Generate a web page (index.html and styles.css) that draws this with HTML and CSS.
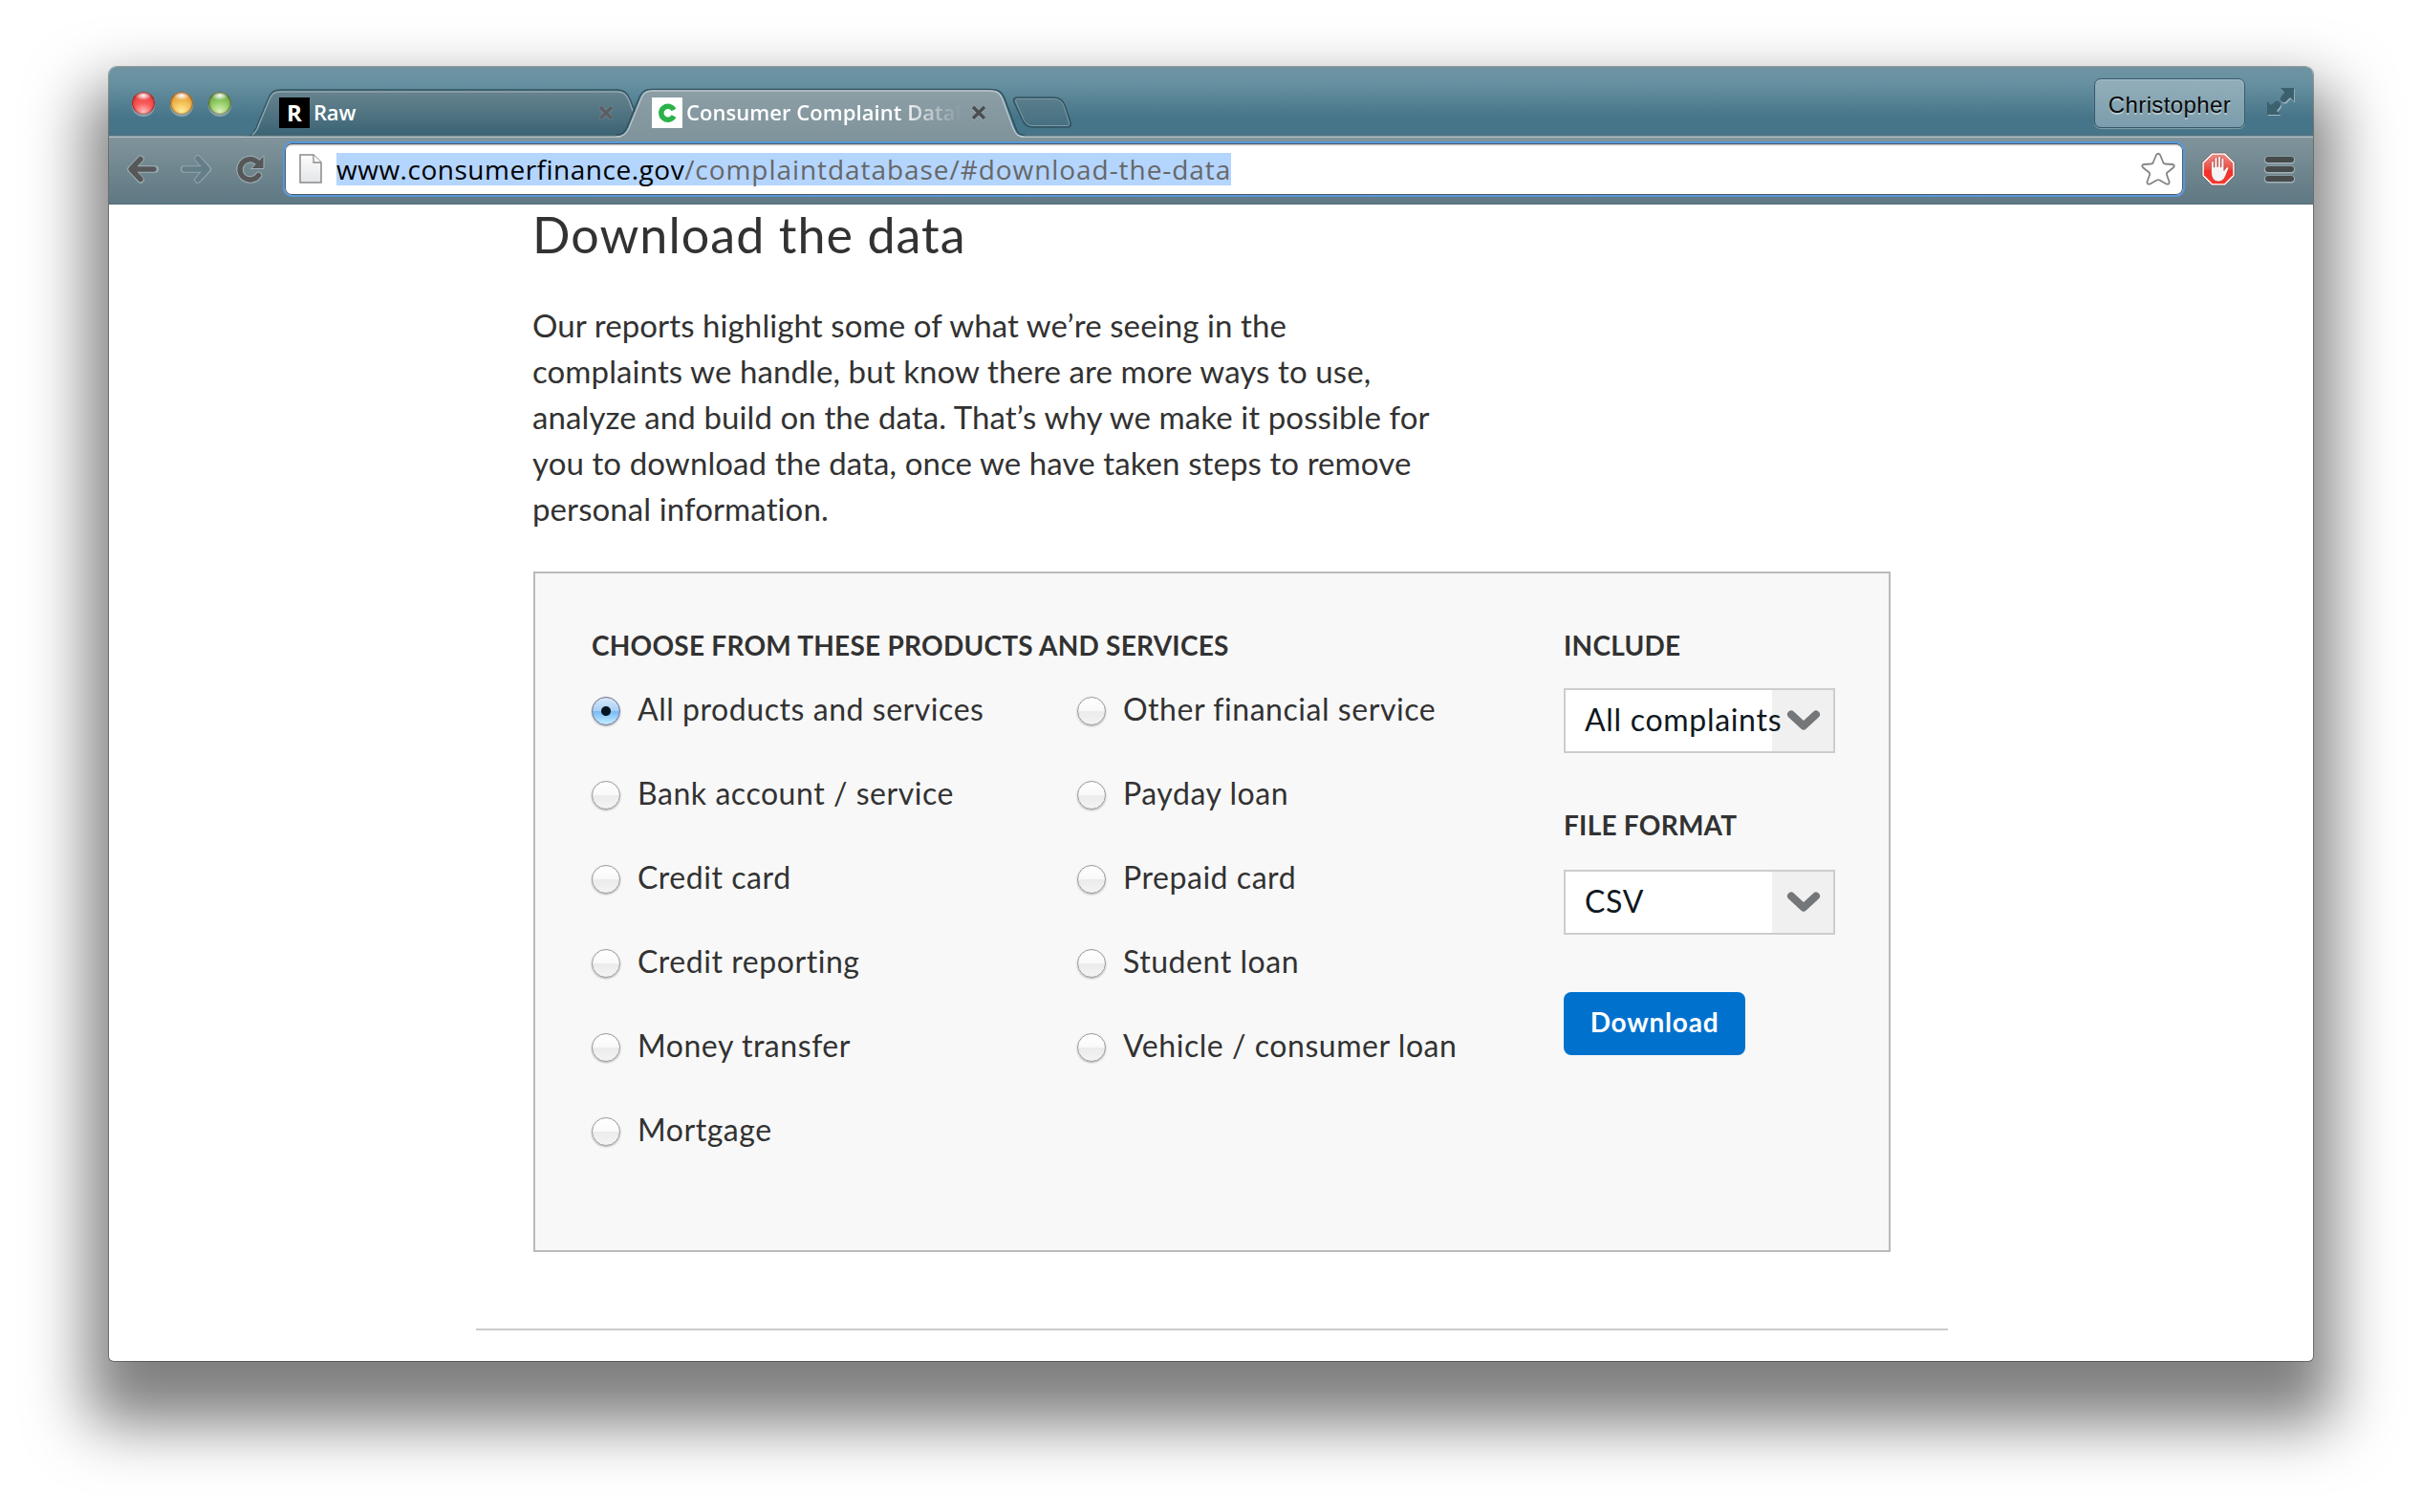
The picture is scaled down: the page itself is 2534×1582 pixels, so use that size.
FILE: index.html
```html
<!DOCTYPE html>
<html lang="en">
<head>
<meta charset="utf-8">
<title>Consumer Complaint Database</title>
<link rel="stylesheet" href="styles.css">
</head>
<body>
<div class="window">
  <header class="tabstrip">
    <svg class="tab-shapes" width="2306" height="74" viewBox="0 0 2306 74" aria-hidden="true">
      <defs>
        <linearGradient id="inactive" x1="0" y1="0" x2="0" y2="1"><stop offset="0" stop-color="#68848f"/><stop offset="1" stop-color="#3a6374"/></linearGradient>
        <linearGradient id="active" x1="0" y1="0" x2="0" y2="1"><stop offset="0" stop-color="#8c9ea6"/><stop offset="1" stop-color="#80949b"/></linearGradient>
        <linearGradient id="newtab" x1="0" y1="0" x2="0" y2="1"><stop offset="0" stop-color="#5b7e8b"/><stop offset="1" stop-color="#456f80"/></linearGradient>
      </defs>
      <path d="M141 73C149 73 151 70 154 64L166 35C169 27 172 24 180 24H531C539 24 542 27 545 34L558 64C561 70 562 73 566 73Z" fill="url(#inactive)" stroke="#2f5361" stroke-width="1.5"/>
      <path d="M150 71C152 70 154 67 155 65L167 36C170 28 173 26 180 26H531C538 26 541 28 544 35L548 46" fill="none" stroke="#8fa5ae" stroke-width="1.5"/>
      <path d="M0 72H2306" stroke="#5d6f77" stroke-width="1"/>
      <path d="M0 73.2H2306" stroke="#b5c1c6" stroke-width="1.5"/>
      <path d="M530 74C538 74 541 71 544 64L556 35C559 27 562 24 569 24H921C929 24 932 26 935 34L946 64C949 71 951 74 958 74Z" fill="url(#active)"/>
      <path d="M530 71.5C537 71 539 69 542 63L554 34C557 26 561 23.500 569 23.500H921C930.500 23.500 934 26 937 33L948 62C950 69 952 71 958 71.500" fill="none" stroke="#2f5361" stroke-width="1.5"/>
      <path d="M530 73.200C538 73 541 70 544 64L556 35C559 27 562 25 569 25H921C929 25 932 27 935 34L946 64C949 71 951 73 958 73.200" fill="none" stroke="#bac5ca" stroke-width="1.5"/>
      <path d="M950 32H988C995 32 998 35 1000 40L1006 58C1007 61 1006 63 1003 63H967C961 63 958 61 956 56L947 37C946 34 947 32 950 32Z" fill="url(#newtab)" stroke="#2f5361" stroke-width="1.5"/>
      <path d="M951 33.500H988C994 33.500 997 36 999 41L1004 57C1005 60 1005 61.500 1002 61.500H967C962 61.500 959 59 957 55L949 37C948 35 949 33.500 951 33.500Z" fill="none" stroke="#7f9aa5"/>
    </svg>
    <div class="lights"><span class="light red"></span><span class="light amber"></span><span class="light green"></span></div>
    <div class="tab tab-raw">
      <span class="favicon favicon-raw">R</span>
      <span class="tab-title raw-title">Raw</span>
      <svg class="close dim" viewBox="0 0 18 18"><path d="M3 3L15 15M15 3L3 15"/></svg>
    </div>
    <div class="tab tab-current">
      <span class="favicon"><svg width="32" height="32" viewBox="0 0 32 32"><path d="M23 13A7 7 0 1 0 23 19.500" fill="none" stroke="#2bb24a" stroke-width="5.500"/></svg></span>
      <span class="tab-title fade">Consumer Complaint Datab</span>
      <svg class="close" viewBox="0 0 18 18"><path d="M3 3L15 15M15 3L3 15"/></svg>
    </div>
    <div class="profile">Christopher</div>
    <svg class="fullscreen" width="30" height="30" viewBox="0 0 30 30">
      <g fill="#a4b8c0" transform="translate(.8 1.400)"><path d="M15 1H29V15L25 11L20 16C17 17 14 14 15 11L19 6Z"/><path d="M1 15V29H15L11 25L15 20C16 17 13 14 10 15L5 19Z"/></g>
      <g fill="#3b606e"><path d="M15 1H29V15L25 11L20 16C17 17 14 14 15 11L19 6Z"/><path d="M1 15V29H15L11 25L15 20C16 17 13 14 10 15L5 19Z"/></g>
    </svg>
  </header>

  <nav class="toolbar">
    <svg class="nav-icon back" width="34" height="32" viewBox="0 0 34 32">
      <g fill="none" stroke-linecap="round" stroke-linejoin="round"><path d="M15 5.500L5 16L15 27M5 16H30" stroke="#a2b0b6" stroke-width="7.500"/><path d="M15 5.500L5 16L15 26.500M6 16H29" stroke="#555758" stroke-width="5.500"/></g>
    </svg>
    <svg class="nav-icon forward" width="34" height="32" viewBox="0 0 34 32">
      <g fill="none" stroke-linecap="round" stroke-linejoin="round"><path d="M19 5L29.500 16L19 27M4.500 16H29" stroke="#91a5ad" stroke-width="7.500"/><path d="M19 5L29 16L19 27M5 16H28" stroke="#647e88" stroke-width="5.500"/></g>
    </svg>
    <svg class="nav-icon reload" width="32" height="32" viewBox="0 0 32 32">
      <g fill="none" stroke-linecap="round"><path d="M22.500 8A10.700 10.700 0 1 0 24.500 22.500" stroke="#a2b0b6" stroke-width="7.500"/><path d="M17 15.500H30V2Z" fill="#555758" stroke="#a2b0b6"/><path d="M22.500 8A10.700 10.700 0 1 0 24.500 22.500" stroke="#555758" stroke-width="5.500"/></g>
    </svg>
    <div class="omnibox">
      <svg class="page-icon" width="26" height="34" viewBox="0 0 26 34">
        <defs><linearGradient id="sheet" x1="0" y1="0" x2="0" y2="1"><stop offset="0" stop-color="#fdfdfd"/><stop offset="1" stop-color="#e4e5e7"/></linearGradient></defs>
        <path d="M2 2H16L24 10V31H2Z" fill="url(#sheet)" stroke="#8a8a8a" stroke-width="1.500"/><path d="M16 2V10H24" fill="#fff" stroke="#8a8a8a" stroke-width="1.300"/>
      </svg>
      <span class="url"><span class="host">www.consumerfinance.gov</span><span class="path">/complaintdatabase/#download-the-data</span></span>
      <svg class="star" width="36" height="36" viewBox="0 0 36 36"><path d="M16 3Q18 .5 20 3L23.500 11.500Q24 12.500 25.500 12.500L33 13Q36 13.700 34 16.200L27.500 21.500Q26.500 22.500 27 24L29.500 31Q30 34.500 26.500 33.500L19.500 29.500Q18 28.700 16.500 29.500L9.500 33.500Q6 34.500 6.500 31L9 24Q9.500 22.500 8.500 21.500L2 16.200Q0 13.700 3 13L10.500 12.500Q12 12.500 12.500 11.500Z" fill="#fff" stroke="#858585" stroke-width="1.800" stroke-linejoin="round"/></svg>
    </div>
    <svg class="adblock" width="36" height="36" viewBox="0 0 36 36">
      <defs><linearGradient id="stop" x1="0" y1="0" x2="0" y2="1"><stop offset="0" stop-color="#ee8a84"/><stop offset=".5" stop-color="#ea4a43"/><stop offset=".55" stop-color="#f23129"/><stop offset="1" stop-color="#fb352c"/></linearGradient></defs>
      <path d="M11 1H25L35 11V25L25 35H11L1 25V11Z" fill="#fff" stroke="#6e5e60" stroke-width=".8"/>
      <path d="M11.800 2.800H24.200L33.200 11.800V24.200L24.200 33.200H11.800L2.800 24.200V11.800Z" fill="url(#stop)"/>
      <path d="M10.500 21V10.500Q12 8.500 13.300 10.500V16H14V6.500Q15.500 4.500 16.800 6.500V15.500H17.500V5.200Q19 3.200 20.300 5.200V15.800H21V7.200Q22.500 5.200 23.800 7.200V19.500L26.500 16Q28.600 14.800 28.800 17L25.500 25Q23.500 30.500 18 31Q10.500 30.500 10.500 21Z" fill="#f5f5f5" stroke="#b3322d" stroke-width=".6"/>
    </svg>
    <svg class="menu" width="34" height="30" viewBox="0 0 34 30">
      <g fill="#a2b0b6"><rect x="1" y="1.500" width="32" height="8" rx="4"/><rect x="1" y="11.500" width="32" height="8" rx="4"/><rect x="1" y="21.500" width="32" height="8" rx="4"/></g>
      <g fill="#474a4b"><rect x="2" y="2" width="30" height="6" rx="3"/><rect x="2" y="12" width="30" height="6" rx="3"/><rect x="2" y="22" width="30" height="6" rx="3"/></g>
    </svg>
  </nav>

  <main class="page">
    <section class="content">
      <h1>Download the data</h1>
      <p class="intro">Our reports highlight some of what we’re seeing in the<br>complaints we handle, but know there are more ways to use,<br>analyze and build on the data. That’s why we make it possible for<br>you to download the data, once we have taken steps to remove<br>personal information.</p>
      <form class="panel">
        <div class="products">
          <h2>CHOOSE FROM THESE PRODUCTS AND SERVICES</h2>
          <ul class="options">
            <li><span class="radio checked"></span>All products and services</li>
            <li><span class="radio"></span>Bank account / service</li>
            <li><span class="radio"></span>Credit card</li>
            <li><span class="radio"></span>Credit reporting</li>
            <li><span class="radio"></span>Money transfer</li>
            <li><span class="radio"></span>Mortgage</li>
            <li><span class="radio"></span>Other financial service</li>
            <li><span class="radio"></span>Payday loan</li>
            <li><span class="radio"></span>Prepaid card</li>
            <li><span class="radio"></span>Student loan</li>
            <li><span class="radio"></span>Vehicle / consumer loan</li>
          </ul>
        </div>
        <div class="settings">
          <h2>INCLUDE</h2>
          <div class="select include"><span>All complaints</span><svg width="36" height="26" viewBox="0 0 36 26"><path d="M5 6.500L18 18.500L31 6.500" fill="none" stroke="#737779" stroke-width="8" stroke-linecap="round" stroke-linejoin="round"/></svg></div>
          <h2>FILE FORMAT</h2>
          <div class="select format"><span>CSV</span><svg width="36" height="26" viewBox="0 0 36 26"><path d="M5 6.500L18 18.500L31 6.500" fill="none" stroke="#737779" stroke-width="8" stroke-linecap="round" stroke-linejoin="round"/></svg></div>
          <div class="button">Download</div>
        </div>
      </form>
    </section>
    <div class="rule"></div>
  </main>
</div>
</body>
</html>
```
FILE: styles.css
```css
* { box-sizing: border-box; }
body { margin: 0; width: 2534px; height: 1582px; overflow: hidden; background: #fff; padding: 70px 0 0 114px; font-family: Lato, sans-serif; color: #323232; }
svg { display: block; flex: none; }

.window {
  width: 2306px; height: 1354px; background: #fff; border-radius: 8px 8px 5px 5px;
  box-shadow: 0 0 0 1px rgba(0,0,0,.32), 0 44px 64px 22px rgba(0,0,0,.5);
  display: flex; flex-direction: column;
}

/* Tab strip */
.tabstrip {
  position: relative; height: 74px; flex: none; display: flex; align-items: flex-start;
  padding-left: 24px; border-radius: 8px 8px 0 0;
  background: linear-gradient(#6f94a2 0, #6690a0 18px, #467488 54px, #467488 100%);
}
.tabstrip > * { position: relative; }
.tabstrip > .tab-shapes { position: absolute; left: 0; top: 0; }
.lights { display: flex; gap: 16px; margin-top: 26px; width: 104px; }
.light { width: 24px; height: 24px; border-radius: 50%; box-shadow: inset 0 0 2px 1px rgba(60,10,0,.55), 0 2px 1px rgba(190,210,218,.55); }
.red { background: radial-gradient(ellipse 9px 5px at 50% 4px, #fff, transparent), radial-gradient(circle at 50% 90%, #ffc2c2 0, #fb5a5a 40%, #d92a2c 100%); }
.amber { background: radial-gradient(ellipse 9px 5px at 50% 4px, #fff, transparent), radial-gradient(circle at 50% 90%, #fff0a0 0, #f6c35a 40%, #d27c20 100%); }
.green { background: radial-gradient(ellipse 9px 5px at 50% 4px, #fff, transparent), radial-gradient(circle at 50% 90%, #e2f5c0 0, #92cc66 45%, #4b8f35 100%); }

.tab { display: flex; align-items: center; height: 32px; margin-top: 32px; }
.tab-raw { margin-left: 50px; width: 351px; }
.tab-current { margin-left: 39px; width: 351px; }
.favicon { width: 32px; height: 32px; background: #fff; flex: none; }
.favicon-raw { background: #000; color: #fff; font: 700 24px/32px "Open Sans", sans-serif; text-align: center; }
.tab-title { font: 600 22px/32px "Open Sans", sans-serif; color: #fff; letter-spacing: .04px; margin-left: 4px; padding-bottom: 2px; flex: 1; white-space: nowrap; }
.raw-title { letter-spacing: -.2px; }
.fade { flex: none; width: 290px; margin-right: 7px; -webkit-mask-image: linear-gradient(to right, #000 222px, transparent 288px); mask-image: linear-gradient(to right, #000 222px, transparent 288px); }
.close { width: 18px; height: 18px; fill: none; stroke: #4b4e50; stroke-width: 3.4; filter: drop-shadow(0 1px 0 #a5b2b8); }
.dim { stroke: #5a5f62; filter: drop-shadow(0 0 1px #8598a0); }

.profile {
  margin-left: auto; margin-top: 12px; width: 158px; height: 52px; border-radius: 7px; border: 1.5px solid #35596a;
  background: linear-gradient(#93aebb, #7b9dab); box-shadow: 0 1px 1px #86a3ae, inset 0 1px 0 #a9bfc9;
  font: 24px/50px "Liberation Sans", Arial, sans-serif; letter-spacing: .4px; color: #0a0a0a; text-align: center; padding-top: 2px;
  text-shadow: 0 1.500px 0 #b4c8d0;
}
.fullscreen { margin: 21px 19px 0 22px; }

/* Toolbar */
.toolbar { height: 70px; flex: none; display: flex; align-items: center; padding: 0 18px 4px 18px; background: linear-gradient(#80949b, #5f7883); border-bottom: 1px solid #566d77; }
.forward { margin-left: 22px; }
.reload { margin-left: 24px; }
.omnibox { margin-left: 18px; width: 1990px; height: 58px; background: #fff; border: 2px solid #5798db; border-radius: 9px; box-shadow: inset 0 0 0 1px #4c5a66, inset 0 2px 2px #bbb; display: flex; align-items: center; padding: 0 8px 0 14px; }
.url { margin-left: 14px; background: #b4d5fe; height: 34px; font: 28px/34px "Open Sans", sans-serif; white-space: nowrap; width: 936px; }
.host { color: #000; letter-spacing: .51px; }
.path { color: #676767; letter-spacing: .94px; }
.star { margin-left: auto; }
.adblock { margin-left: 17px; }
.menu { margin-left: 29px; }

/* Page */
.page { flex: 1; padding-left: 384px; }
.content { width: 1540px; padding: 0 60px; }
h1 { margin: 0 0 0 -1px; padding-top: 1px; font-size: 52px; line-height: 60px; font-weight: 400; letter-spacing: 1.06px; }
.intro { margin: 41px 0 42px -1px; font-size: 33px; line-height: 48px; letter-spacing: .1px; white-space: nowrap; }
.panel { display: grid; grid-template-columns: 1017px 284px; height: 712px; padding: 58px 0 0 59px; background: #f8f8f8; border: 2px solid #bababa; }
h2 { margin: 0; font-size: 28px; line-height: 34px; font-weight: 700; letter-spacing: .25px; }
.options { list-style: none; margin: 30px 0 0; padding: 0; display: grid; grid-template: repeat(6, 40px) / 508px 508px; grid-auto-flow: column; row-gap: 48px; font-size: 32px; line-height: 40px; letter-spacing: .55px; }
.options li { display: flex; align-items: center; gap: 18px; }
.radio { width: 30px; height: 30px; margin-top: 3px; border-radius: 50%; border: 1.500px solid #9a9a9a; background: linear-gradient(#fff 0, #f9f9f9 50%, #ebebeb 52%, #f4f4f4 100%); box-shadow: 0 1px 2px rgba(0,0,0,.3); }
.checked { border-color: #6d6f8e; background: radial-gradient(circle, #061421 4.500px, transparent 5.500px), linear-gradient(#d8e9f8 0, #a9d0f5 48%, #78b9f6 52%, #c5f0ff 100%); }
.select { width: 284px; height: 68px; border: 2px solid #cdcdcd; display: flex; align-items: center; justify-content: space-between; padding: 0 13px 0 20px; background: linear-gradient(to right, #fff calc(100% - 64px), #f0f0f0 0); color: #101820; font-size: 32px; letter-spacing: .7px; white-space: nowrap; }
.select span { padding-bottom: 4px; width: 0; }
.include { margin: 28px 0 58px; }
.format { margin: 30px 0 60px; }
.button { width: 190px; height: 66px; border-radius: 8px; background: #0072ce; color: #fff; font-size: 28px; line-height: 63px; font-weight: 700; letter-spacing: .79px; text-align: center; }
.rule { width: 1540px; height: 2px; margin-top: 80px; background: #ccc; }
```
